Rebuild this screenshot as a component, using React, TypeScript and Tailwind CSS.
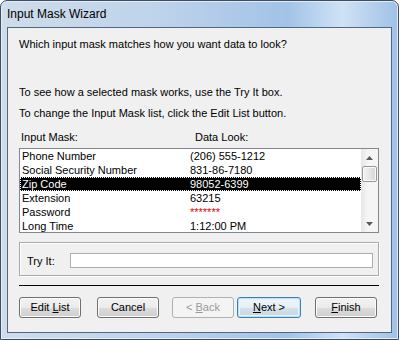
import React from "react";

const rows: [string, string][] = [
  ["Phone Number", "(206) 555-1212"],
  ["Social Security Number", "831-86-7180"],
  ["Zip Code", "98052-6399"],
  ["Extension", "63215"],
  ["Password", "*******"],
  ["Long Time", "1:12:00 PM"],
];

interface WizButtonProps {
  children: React.ReactNode;
  variant?: "normal" | "default" | "disabled";
  className?: string;
}

const WizButton: React.FC<WizButtonProps> = ({
  children,
  variant = "normal",
  className = "",
}) => {
  if (variant === "disabled") {
    return (
      <div
        className={`h-[21px] w-[62px] rounded-[3px] border border-[#adb2b5] bg-[#f4f4f4] text-[#9a9a9a] flex items-center justify-center ${className}`}
      >
        <span>{children}</span>
      </div>
    );
  }
  if (variant === "default") {
    return (
      <div
        className={`h-[21px] w-[64px] rounded-[3px] border border-[#3c7fb1] bg-[linear-gradient(180deg,#eef6fb_0%,#e6eff5_50%,#d6e2ea_50%,#c8d6e0_100%)] shadow-[inset_0_0_0_1px_#bfe2f7,inset_0_0_0_2px_#e4f3fc] text-black flex items-center justify-center ${className}`}
      >
        <span>{children}</span>
      </div>
    );
  }
  return (
    <div
      className={`h-[21px] w-[62px] rounded-[3px] border border-[#707070] bg-[linear-gradient(180deg,#f2f2f2_0%,#ebebeb_50%,#dddddd_50%,#cfcfcf_100%)] shadow-[inset_0_0_0_1px_#fbfbfb] text-black flex items-center justify-center ${className}`}
    >
      <span>{children}</span>
    </div>
  );
};

const Arrow: React.FC<{ down?: boolean }> = ({ down = false }) => (
  <svg width="7" height="4" viewBox="0 0 7 4">
    {down ? (
      <path d="M0 0 H7 L3.5 4 Z" fill="#5a5a5a" />
    ) : (
      <path d="M0 4 H7 L3.5 0 Z" fill="#5a5a5a" />
    )}
  </svg>
);

const App: React.FC = () => {
  return (
    <div className="w-[399px] h-[340px] bg-white font-['Liberation_Sans',Arial,sans-serif] text-[11px] text-black">
      <div className="w-[399px] h-[340px] rounded-t-[7px] border border-[#3d4e62] bg-[linear-gradient(90deg,#cfdcea_0%,#bed3ea_40%,#a2c3e7_72%,#cfe2f5_86%,#9fc1e6_100%)] shadow-[inset_0_0_0_1px_#e3edf7] flex flex-col">
        {/* title bar */}
        <div className="h-[26px] pl-[6px] pt-[5px] text-[12px] leading-[16px] text-black">
          Input Mask Wizard
        </div>

        {/* client area */}
        <div className="mx-[6px] h-[306px] border border-[#4f6782] bg-[#f0f0f0] pl-[11px] pr-[12px] pt-[9px] flex flex-col">
          <div className="leading-[14px]">
            Which input mask matches how you want data to look?
          </div>
          <div className="leading-[14px] mt-[34px]">
            To see how a selected mask works, use the Try It box.
          </div>
          <div className="leading-[14px] mt-[7px]">
            To change the Input Mask list, click the Edit List button.
          </div>

          <div className="flex leading-[14px] mt-[10px]">
            <div className="w-[176px] pl-[2px]">Input Mask:</div>
            <div>Data Look:</div>
          </div>

          {/* list box */}
          <div className="mt-[4px] h-[85px] border border-[#828790] bg-white flex overflow-hidden">
            <div className="flex-1 flex flex-col">
              {rows.map(([mask, look], i) => {
                const selected = i === 2;
                return (
                  <div
                    key={mask}
                    className={`flex h-[14px] shrink-0 leading-[14px] ${
                      selected
                        ? "bg-black text-white outline-1 outline-dotted outline-white -outline-offset-1"
                        : "text-black"
                    }`}
                  >
                    <div className="w-[170px] pl-[2px] whitespace-nowrap">
                      {mask}
                    </div>
                    <div
                      className={`whitespace-nowrap ${
                        mask === "Password" ? "text-[#e00000]" : ""
                      }`}
                    >
                      {look}
                    </div>
                  </div>
                );
              })}
            </div>

            {/* scrollbar */}
            <div className="w-[17px] flex flex-col bg-[linear-gradient(90deg,#e6e6e6_0%,#f5f5f5_40%,#f5f5f5_100%)]">
              <div className="h-[17px] flex items-center justify-center">
                <Arrow />
              </div>
              <div className="h-[16px] mx-[1px] rounded-[2px] border border-[#979797] bg-[linear-gradient(90deg,#f4f4f4_0%,#e6e6e6_50%,#d6d6d6_100%)] shadow-[inset_0_0_0_1px_#fafafa]" />
              <div className="flex-1" />
              <div className="h-[17px] flex items-center justify-center">
                <Arrow down />
              </div>
            </div>
          </div>

          {/* try it group */}
          <div className="mt-[9px] h-[34px] border border-[#a9a9a9] shadow-[inset_1px_1px_0_#ffffff,1px_1px_0_#ffffff] flex pt-[10px] pl-[7px] pr-[5px]">
            <div className="w-[43px] h-[15px] leading-[15px] pt-[1px]">
              Try It:
            </div>
            <div className="flex-1 h-[15px] border border-[#abadb3] bg-white" />
          </div>

          {/* separator */}
          <div className="mt-[9px] h-px bg-black" />

          {/* buttons */}
          <div className="mt-[11px] flex">
            <WizButton>
              Edit <span className="underline">L</span>ist
            </WizButton>
            <WizButton className="ml-[16px]">Cancel</WizButton>
            <WizButton variant="disabled" className="ml-[13px]">
              &lt; <span className="underline">B</span>ack
            </WizButton>
            <WizButton variant="default" className="ml-[3px]">
              <span className="underline">N</span>ext &gt;
            </WizButton>
            <WizButton className="ml-[14px]">
              <span className="underline">F</span>inish
            </WizButton>
          </div>
        </div>
      </div>
    </div>
  );
};

export default App;
